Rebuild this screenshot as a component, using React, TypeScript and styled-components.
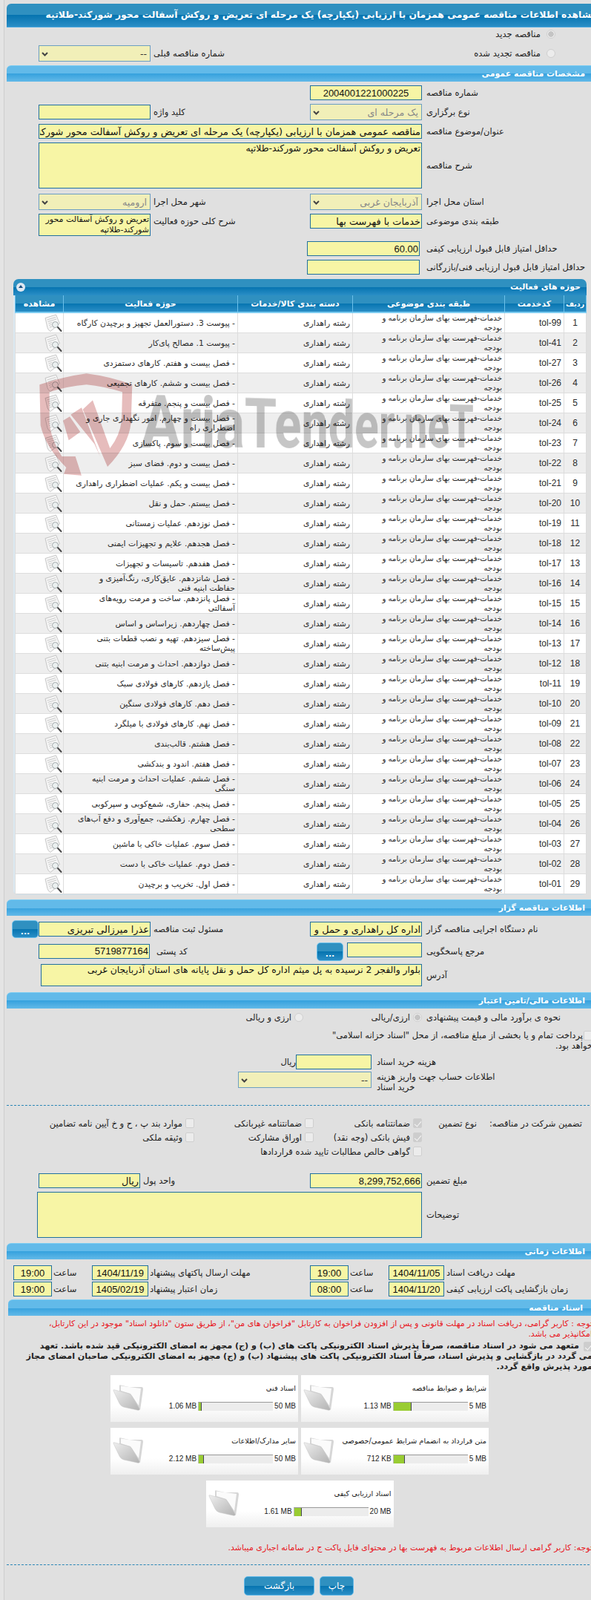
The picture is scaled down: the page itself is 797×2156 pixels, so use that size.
import styled, {createGlobalStyle} from "styled-components";

const activities = [
    ["tol-99", "- پیوست 3. دستورالعمل تجهیز و برچیدن کارگاه"],
    ["tol-41", "- پیوست 1. مصالح پای‌کار"],
    ["tol-27", "- فصل بیست و هفتم. کارهای دستمزدی"],
    ["tol-26", "- فصل بیست و ششم. کارهای تجمیعی"],
    ["tol-25", "- فصل بیست و پنجم. متفرقه"],
    ["tol-24", "- فصل بیست و چهارم. امور نگهداری جاری و اضطراری راه"],
    ["tol-23", "- فصل بیست و سوم. پاکسازی"],
    ["tol-22", "- فصل بیست و دوم. فضای سبز"],
    ["tol-21", "- فصل بیست و یکم. عملیات اضطراری راهداری"],
    ["tol-20", "- فصل بیستم. حمل و نقل"],
    ["tol-19", "- فصل نوزدهم. عملیات زمستانی"],
    ["tol-18", "- فصل هجدهم. علایم و تجهیزات ایمنی"],
    ["tol-17", "- فصل هفدهم. تاسیسات و تجهیزات"],
    ["tol-16", "- فصل شانزدهم. عایق‌کاری، رنگ‌آمیزی و حفاظت ابنیه فنی"],
    ["tol-15", "- فصل پانزدهم. ساخت و مرمت رویه‌های آسفالتی"],
    ["tol-14", "- فصل چهاردهم. زیراساس و اساس"],
    ["tol-13", "- فصل سیزدهم. تهیه و نصب قطعات بتنی پیش‌ساخته"],
    ["tol-12", "- فصل دوازدهم. احداث و مرمت ابنیه بتنی"],
    ["tol-11", "- فصل یازدهم. کارهای فولادی سبک"],
    ["tol-10", "- فصل دهم. کارهای فولادی سنگین"],
    ["tol-09", "- فصل نهم. کارهای فولادی با میلگرد"],
    ["tol-08", "- فصل هشتم. قالب‌بندی"],
    ["tol-07", "- فصل هفتم. اندود و بندکشی"],
    ["tol-06", "- فصل ششم. عملیات احداث و مرمت ابنیه سنگی"],
    ["tol-05", "- فصل پنجم. حفاری، شمع‌کوبی و سپرکوبی"],
    ["tol-04", "- فصل چهارم. زهکشی، جمع‌آوری و دفع آب‌های سطحی"],
    ["tol-03", "- فصل سوم. عملیات خاکی با ماشین"],
    ["tol-02", "- فصل دوم. عملیات خاکی با دست"],
    ["tol-01", "- فصل اول. تخریب و برچیدن"],
];

const docs = [
    {title: "شرایط و ضوابط مناقصه", used: "1.13 MB", max: "5 MB", fill: 24},
    {title: "اسناد فنی", used: "1.06 MB", max: "50 MB", fill: 4},
    {title: "متن قرارداد به انضمام شرایط عمومی/خصوصی", used: "712 KB", max: "5 MB", fill: 15},
    {title: "سایر مدارک/اطلاعات", used: "2.12 MB", max: "50 MB", fill: 7},
    {title: "اسناد ارزیابی کیفی", used: "1.61 MB", max: "20 MB", fill: 10},
];

const GlobalStyle = createGlobalStyle`
  html, body {
    margin: 0;
    padding: 0;
    background: #e4e4e4;
  }

  * {
    box-sizing: border-box;
  }
`
const Frame = styled.div`
  width: 797px;
  height: 2156px;
  overflow: hidden;
  padding-left: 5px;
`
const Rail = styled.div`
  width: 804px;
  height: 2156px;
  padding-left: 3px;
  border-left: 1px solid #cdcdcd;
  background: #e0e0e0;
`
const Page = styled.div`
  direction: rtl;
  width: 796px;
  padding-top: 5px;
  font-family: "DejaVu Sans", sans-serif;
  font-size: 11.5px;
  color: #222;
  display: flex;
  flex-direction: column;
`
const TitleBar = styled.div`
  height: 32px;
  line-height: 30px;
  color: #fff;
  font-weight: bold;
  font-size: 12.4px;
  white-space: nowrap;
  border-radius: 6px 6px 0 0;
  border-bottom: 1px solid #4aa8e0;
  background: linear-gradient(#2f90c0 0, #2f90c0 50%, #0674b0 50%, #2a8ec6 100%);
`
const SectionBar = styled.div<{ $top?: number; $inset?: number }>`
  height: 22px;
  line-height: 21px;
  margin-top: ${p => p.$top ?? 0}px;
  margin-left: ${p => p.$inset ?? 0}px;
  padding-right: ${p => p.$inset ? 19 : 16}px;
  color: #fff;
  font-weight: bold;
  font-size: 11px;
  border-radius: 6px 6px 0 0;
  border-top: 1px solid #7accf2;
  background: linear-gradient(#62bae9 0, #62bae9 50%, #37a2de 50%, #62b9e8 100%);
`
const FieldRow = styled.div<{ $top?: number; $right?: number }>`
  display: grid;
  grid-template-columns: 236px 151px 1fr ${p => p.$right ?? 151}px 43px;
  align-items: center;
  margin-top: ${p => p.$top ?? 5}px;
`
const Label = styled.label<{ $pad?: number; $alignTop?: boolean }>`
  text-align: left;
  padding-left: ${p => p.$pad ?? 6}px;
  line-height: 20px;
  white-space: nowrap;
  align-self: ${p => p.$alignTop ? "start" : "auto"};
`
const Input = styled.input<{ $latin?: boolean; $center?: boolean; $w?: number; $span?: boolean; $inner?: number; $start?: boolean; $end?: boolean }>`
  display: block;
  height: 20px;
  width: ${p => p.$w ? `${p.$w}px` : "100%"};
  min-width: 0;
  padding: 0 1px;
  margin: 0;
  margin-right: ${p => p.$inner ?? 0}px;
  border: 1px solid #21709f;
  border-radius: 0;
  outline: none;
  color: #111;
  background: #f7f5a5;
  font-family: ${p => p.$latin ? `"Liberation Sans", sans-serif` : `"DejaVu Sans", sans-serif`};
  font-size: ${p => p.$latin ? "13px" : "12.9px"};
  text-align: ${p => p.$center ? "center" : "right"};
  grid-column: ${p => p.$span ? "2 / 5" : "auto"};
  align-self: ${p => p.$start ? "start" : "auto"};
  justify-self: ${p => p.$end ? "end" : "auto"};
`
const TextArea = styled.textarea<{ $h: number; $w: number }>`
  display: block;
  height: ${p => p.$h}px;
  width: ${p => p.$w}px;
  grid-column: 2 / 6;
  padding: 0 1px;
  margin: 0;
  resize: none;
  overflow: hidden;
  outline: none;
  border: 1px solid #21709f;
  border-radius: 0;
  color: #111;
  background: #f7f5a5;
  font-family: "DejaVu Sans", sans-serif;
  font-size: 12.4px;
  line-height: 14px;
`
const SmallArea = styled(TextArea)`
  grid-column: auto;
  font-size: 11px;
`
const Select = styled.select<{ $muted?: boolean; $w?: number }>`
  display: block;
  height: 22px;
  width: ${p => p.$w ? `${p.$w}px` : "100%"};
  margin: 0;
  padding: 0 4px 0 16px;
  appearance: none;
  border: 1px solid #6c9fc2;
  border-radius: 0;
  outline: none;
  color: ${p => p.$muted ? "#888" : "#333"};
  font-family: "DejaVu Sans", sans-serif;
  font-size: 12.6px;
  background: #f1efb8 url("data:image/svg+xml,%3Csvg xmlns='http://www.w3.org/2000/svg' width='9' height='6'%3E%3Cpath d='M1 1l3.5 3.5L8 1' fill='none' stroke='%23444' stroke-width='2'/%3E%3C/svg%3E") no-repeat 3px 8px;
`
const Radio = styled.span<{ $on?: boolean }>`
  display: inline-block;
  flex: none;
  width: 12px;
  height: 12px;
  border-radius: 50%;
  border: 1px solid #cfcfcf;
  background: ${p => p.$on ? "radial-gradient(circle, #c4c4c4 0 3.5px, #ededed 4px)" : "#ececec"};
`
const Check = styled.span<{ $on?: boolean }>`
  display: inline-block;
  position: relative;
  flex: none;
  width: 12px;
  height: 13px;
  vertical-align: middle;
  border-radius: 2px;
  border: 1px solid #cfcfcf;
  background: ${p => p.$on ? "#cdcdcd" : "#ececec"};

  &::after {
    content: "";
    display: ${p => p.$on ? "block" : "none"};
    position: absolute;
    left: 3px;
    top: 1px;
    width: 4px;
    height: 8px;
    border: solid #f6f6f6;
    border-width: 0 1.5px 1.5px 0;
    transform: rotate(40deg);
  }
`
const Choice = styled.div<{ $inner?: number; $gap?: number; $span?: string }>`
  display: flex;
  align-items: center;
  gap: ${p => p.$gap ?? 4}px;
  padding-right: ${p => p.$inner ?? 0}px;
  white-space: nowrap;
  line-height: 18px;
  grid-column: ${p => p.$span ?? "auto"};
`
const Panel = styled.div`
  position: relative;
  width: 773px;
  margin: 6px 0 0 0;
  margin-right: 14px;
  padding: 0 0 0 3px;
  border-radius: 7px 7px 6px 6px;
  background: #dbe9f2;
  border-bottom: 1px solid #cfdfe8;
`
const PanelHead = styled.div`
  position: relative;
  height: 22px;
  margin-left: -3px;
  line-height: 21px;
  padding-right: 8px;
  color: #fff;
  font-weight: bold;
  font-size: 11px;
  border-radius: 7px 7px 0 0;
  background: linear-gradient(#2f90c0 0, #2f90c0 50%, #0674b0 50%, #2a8ec6 100%);
`
const Toggle = styled.span`
  position: absolute;
  left: 4px;
  top: 5px;
  width: 12px;
  height: 12px;
  border-radius: 50%;
  background: #dfe8f2;

  &::after {
    content: "";
    position: absolute;
    left: 3px;
    top: 3px;
    border: 3px solid transparent;
    border-top-width: 0;
    border-bottom: 4px solid #1a4f80;
  }
`
const Table = styled.table`
  width: 770px;
  table-layout: fixed;
  border-collapse: collapse;
  background: #fff;
`
const HeadCell = styled.th<{ $small?: boolean }>`
  height: 23px;
  padding: 0;
  color: #fff;
  font-size: ${p => p.$small ? "9.5px" : "11px"};
  font-weight: bold;
  white-space: nowrap;
  border-left: 1px solid #6cc0ea;
  border-right: 1px solid #6cc0ea;
  border-bottom: 2px solid #7ccbf0;
  background: linear-gradient(#2f90c0 0, #2f90c0 50%, #0674b0 50%, #2a8ec6 100%);
`
const Row = styled.tr<{ $alt: boolean }>`
  height: 27px;
  background: ${p => p.$alt ? "#eeeeee" : "#ffffff"};
`
const Cell = styled.td<{ $latin?: boolean; $center?: boolean; $size?: number }>`
  padding: 0 3px;
  height: 27px;
  line-height: 13px;
  font-size: ${p => p.$latin ? 12 : p.$size ?? 10.8}px;
  font-family: ${p => p.$latin ? `"Liberation Sans", sans-serif` : "inherit"};
  text-align: ${p => p.$center ? "center" : "right"};
  color: #2b2b2b;
  border: 1px solid #dddddd;
  overflow: hidden;
`
const CodeCell = styled(Cell)`
  direction: ltr;
`
const ActivityText = styled.span`
  display: block;
  padding: 0 0 0 10px;
`
const RowIcon = styled.svg`
  display: block;
  margin: -1px -2px -1px 0;
`
const Watermark = styled.div`
  position: absolute;
  left: 0;
  top: 0;
  width: 100%;
  height: 300px;
  pointer-events: none;
  mix-blend-mode: multiply;
`
const WatermarkShield = styled.svg`
  position: absolute;
  left: 32px;
  top: 124px;
`
const WatermarkText = styled.div`
  position: absolute;
  left: 172px;
  top: 138px;
  height: 110px;
  direction: ltr;
  font-family: "Roboto", sans-serif;
  font-weight: 700;
  font-size: 100px;
  line-height: 110px;
  white-space: nowrap;
  color: #c6c6c6;
  transform-origin: left 89px;
  transform: perspective(600px) rotateY(15deg) scaleX(0.84);
`
const Dots = styled.button<{ $h: number }>`
  display: block;
  width: 36px;
  height: ${p => p.$h}px;
  padding: 6px 0 0;
  flex: none;
  color: #fff;
  font-size: 11px;
  font-weight: bold;
  font-family: "DejaVu Sans", sans-serif;
  border: 1px solid #6cc0ea;
  border-radius: 5px;
  background: linear-gradient(#2f90c0 0, #2f90c0 50%, #0674b0 50%, #2a8ec6 100%);
`
const RefCell = styled.div`
  display: flex;
  align-items: flex-start;
  gap: 5px;
  height: 25px;
  padding-top: 1px;
`
const Paragraph = styled.div<{ $top: number; $size?: number; $red?: boolean; $bold?: boolean }>`
  margin-top: ${p => p.$top}px;
  padding-right: 6px;
  font-size: ${p => p.$size ?? 11.5}px;
  line-height: 14px;
  white-space: nowrap;
  color: ${p => p.$red ? "#e8141c" : "#222"};
  font-weight: ${p => p.$bold ? "bold" : "normal"};
`
const InlineBox = styled.span<{ $w: number }>`
  display: inline-block;
  width: ${p => p.$w}px;
`
const FeeRow = styled.div<{ $top: number }>`
  display: grid;
  grid-template-columns: 304px 102px 1fr;
  align-items: center;
  margin-top: ${p => p.$top}px;
`
const AccountRow = styled.div`
  display: grid;
  grid-template-columns: 304px 1fr;
  margin-top: 3px;
  height: 28px;
`
const AccountLabel = styled(Label)`
  padding-left: 7px;
  line-height: 14px;
  white-space: normal;
`
const Divider = styled.div<{ $top: number }>`
  margin-top: ${p => p.$top}px;
  border-top: 1px dashed #2a86b6;
`
const GuaranteeGrid = styled.div`
  display: grid;
  grid-template-columns: 162px 74px 146px 161px 1fr;
  grid-auto-rows: 19px;
  align-items: center;
  margin-top: 14px;
  white-space: nowrap;
`
const GuaranteeTitle = styled.div`
  padding-right: 20px;
`
const TimeRow = styled.div<{ $top: number }>`
  display: grid;
  grid-template-columns: 206px 75px 54px 52px 218px 76px 54px 52px;
  align-items: center;
  margin-top: ${p => p.$top}px;
`
const TimeWord = styled(Label)`
  padding-left: 2px;
`
const DocGrid = styled.div`
  display: grid;
  grid-template-columns: 253px 253px;
  gap: 8px 4px;
  margin: 4px 146px 0 0;
  justify-content: start;
`
const DocCard = styled.div<{ $wide?: boolean }>`
  display: flex;
  height: 63px;
  padding: 0 3px;
  justify-self: center;
  width: 253px;
  grid-column: ${p => p.$wide ? "1 / -1" : "auto"};
  background: linear-gradient(#ffffff 0, #ffffff 65%, #efefef 100%);
`
const DocInfo = styled.div`
  flex: 1;
  display: flex;
  flex-direction: column;
`
const DocTitle = styled.div`
  margin-top: 11px;
  line-height: 14px;
  font-size: 9.8px;
  white-space: nowrap;
  color: #222;
`
const Meter = styled.div`
  display: flex;
  align-items: center;
  direction: ltr;
  justify-content: flex-end;
  margin-top: 11px;
  gap: 2px;
  font-family: "Liberation Sans", sans-serif;
  font-size: 10px;
  color: #222;
  line-height: 12px;
`
const MeterTrack = styled.div`
  width: 101px;
  height: 12px;
  background: #ececec;
  border-top: 1px solid #999;
  border-left: 1px solid #bbb;
`
const MeterFill = styled.div`
  height: 100%;
  background: #9c3;
  border-right: 1px solid #445;
`
const FolderSvg = styled.svg`
  flex: none;
  margin-top: 13px;
`
const Buttons = styled.div`
  display: flex;
  gap: 7px;
  margin: 15px 328px 0 0;
`
const ActionButton = styled.button<{ $w: number }>`
  width: ${p => p.$w}px;
  height: 26px;
  padding: 0;
  color: #fff;
  font-family: "DejaVu Sans", sans-serif;
  font-size: 12px;
  border: 1px solid #5fb8e8;
  border-radius: 5px;
  background: linear-gradient(#2f90c0 0, #2f90c0 50%, #0674b0 50%, #2a8ec6 100%);
`

function SearchDocIcon() {
    return (
        <RowIcon width="24" height="25" viewBox="0 0 24 25">
            <path d="M1 5.5 L15.5 1 L20.5 13 L8 23.5 Q5 22 4 18.5 Z" fill="#f6f6f6" stroke="#b9b9b9" strokeWidth="0.8"/>
            <path d="M3.5 8 L15 4.5 M4.5 10.5 L16 7 M5.5 13 L10 11.6 M6 15.5 L9.5 14.4 M7 18 L10 17" stroke="#c4c4c4" strokeWidth="0.9"/>
            <circle cx="14.5" cy="14.5" r="4" fill="#ebf0f0" stroke="#a2a8aa" strokeWidth="1"/>
            <path d="M18 18 L22.5 23" stroke="#4a4a4a" strokeWidth="2" strokeLinecap="round"/>
        </RowIcon>
    )
}

function FolderIcon({id}: { id: string }) {
    return (
        <FolderSvg width="42" height="36" viewBox="0 0 42 36">
            <defs>
                <linearGradient id={id} x1="0" y1="0" x2="1" y2="1">
                    <stop offset="0" stopColor="#efefef"/>
                    <stop offset="1" stopColor="#b2b2b2"/>
                </linearGradient>
            </defs>
            <path d="M9 1 Q9 0 11 0.5 L22 3 L39 3 Q41 3 41 6 L37 34 L24 14 L9 9 Z" fill="#d6d6d6"/>
            <path d="M11 1.5 L38 5 L35 28 L24 12 L11 8 Z" fill="#fbfbfb"/>
            <path d="M1 8 Q0 6 3 7 L22 12 Q25 13 27 17 L36 32 Q37 35 33 34 L15 30 Q11 29 9 25 Z" fill={`url(#${id})`} stroke="#c4c4c4" strokeWidth="0.5"/>
        </FolderSvg>
    )
}

function Shield() {
    return (
        <WatermarkShield width="130" height="146" viewBox="50 50 390 438">
            <path fill="#e6bcbc" d="M60 105 Q160 72 250 60 Q345 72 435 105 L430 260 Q420 350 335 437 L235 205 L275 168 L345 362 Q385 310 392 250 L395 135 Q320 112 250 105 Q170 112 100 135 L100 260 Q105 320 150 395 L205 395 L230 472 L158 466 L168 440 Q85 360 64 270 Z"/>
            <path fill="#e6bcbc" d="M155 250 L182 234 L225 296 L178 330 Z"/>
            <path fill="#e6bcbc" d="M186 226 L230 198 L305 395 L282 345 Z"/>
        </WatermarkShield>
    )
}

export default function App() {
    return (
        <Frame>
            <GlobalStyle/>
            <Rail>
                <Page>
                    <TitleBar>مشاهده اطلاعات مناقصه عمومی همزمان با ارزیابی (یکپارچه) یک مرحله ای تعریض و روکش آسفالت محور شورکند-طلاتپه</TitleBar>
                    <Choice $inner={56} $gap={8}><Radio $on/>مناقصه جدید</Choice>
                    <FieldRow $top={6}>
                        <Choice $inner={56} $gap={8} $span="1 / 3"><Radio/>مناقصه تجدید شده</Choice>
                        <Label $pad={4}>شماره مناقصه قبلی</Label>
                        <Select><option>--</option></Select>
                    </FieldRow>

                    <SectionBar $top={5}>مشخصات مناقصه عمومی</SectionBar>
                    <FieldRow>
                        <Label>شماره مناقصه</Label>
                        <Input readOnly $latin $center value="2004001221000225"/>
                    </FieldRow>
                    <FieldRow>
                        <Label>نوع برگزاری</Label>
                        <Select $muted><option>یک مرحله ای</option></Select>
                        <Label $pad={4}>کلید واژه</Label>
                        <Input readOnly value=""/>
                    </FieldRow>
                    <FieldRow>
                        <Label>عنوان/موضوع مناقصه</Label>
                        <Input readOnly $span value="مناقصه عمومی همزمان با ارزیابی (یکپارچه) یک مرحله ای تعریض و روکش آسفالت محور شورکند-طلاتپه"/>
                    </FieldRow>
                    <FieldRow>
                        <Label>شرح مناقصه</Label>
                        <TextArea readOnly $h={62} $w={517} value="تعریض و روکش آسفالت محور شورکند-طلاتپه"/>
                    </FieldRow>
                    <FieldRow $top={7}>
                        <Label>استان محل اجرا</Label>
                        <Select $muted><option>آذربایجان غربی</option></Select>
                        <Label $pad={4}>شهر محل اجرا</Label>
                        <Select $muted><option>ارومیه</option></Select>
                    </FieldRow>
                    <FieldRow>
                        <Label $alignTop>طبقه بندی موضوعی</Label>
                        <Input readOnly $start value="خدمات با فهرست بها"/>
                        <Label $pad={4} $alignTop>شرح کلی حوزه فعالیت</Label>
                        <SmallArea readOnly $h={30} $w={151} value={"تعریض و روکش آسفالت محور\nشورکند-طلاتپه"}/>
                    </FieldRow>
                    <FieldRow $top={7}>
                        <Label>حداقل امتیاز قابل قبول ارزیابی کیفی</Label>
                        <Input readOnly $latin value="60.00" $w={152} $inner={3}/>
                    </FieldRow>
                    <FieldRow>
                        <Label>حداقل امتیاز قابل قبول ارزیابی فنی/بازرگانی</Label>
                        <Input readOnly value="" $w={152} $inner={3}/>
                    </FieldRow>

                    <Panel>
                        <PanelHead>حوزه های فعالیت<Toggle/></PanelHead>
                        <Table>
                            <colgroup>
                                <col width={30}/>
                                <col width={80}/>
                                <col width={205}/>
                                <col width={155}/>
                                <col width={235}/>
                                <col width={65}/>
                            </colgroup>
                            <thead>
                            <tr>
                                <HeadCell $small>ردیف</HeadCell>
                                <HeadCell>کدخدمت</HeadCell>
                                <HeadCell>طبقه بندی موضوعی</HeadCell>
                                <HeadCell>دسته بندی کالا/خدمات</HeadCell>
                                <HeadCell>حوزه فعالیت</HeadCell>
                                <HeadCell>مشاهده</HeadCell>
                            </tr>
                            </thead>
                            <tbody>
                            {activities.map(([code, name], i) => (
                                <Row key={code} $alt={i % 2 === 1}>
                                    <Cell $latin $center>{i + 1}</Cell>
                                    <CodeCell $latin>{code}</CodeCell>
                                    <Cell $size={10.2}>خدمات-فهرست بهای سازمان برنامه و<br/>بودجه</Cell>
                                    <Cell>رشته راهداری</Cell>
                                    <Cell><ActivityText>{name}</ActivityText></Cell>
                                    <Cell><SearchDocIcon/></Cell>
                                </Row>
                            ))}
                            </tbody>
                        </Table>
                        <Watermark>
                            <Shield/>
                            <WatermarkText>AriaTender.neT</WatermarkText>
                        </Watermark>
                    </Panel>

                    <SectionBar $top={6}>اطلاعات مناقصه گزار</SectionBar>
                    <FieldRow $top={6}>
                        <Label>نام دستگاه اجرایی مناقصه گزار</Label>
                        <Input readOnly value="اداره کل راهداری و حمل و نقل جاده ای استان آذربایجان غربی"/>
                        <Label $pad={4}>مسئول ثبت مناقصه</Label>
                        <Input readOnly value="عذرا میرزالی تبریزی"/>
                        <Dots $h={24}>...</Dots>
                    </FieldRow>
                    <FieldRow>
                        <Label>مرجع پاسخگویی</Label>
                        <RefCell>
                            <Input readOnly value="" $w={101}/>
                            <Dots $h={25}>...</Dots>
                        </RefCell>
                        <Label $pad={8}>کد پستی</Label>
                        <Input readOnly $latin $end value="5719877164" $w={150}/>
                    </FieldRow>
                    <FieldRow $top={5}>
                        <Label>آدرس</Label>
                        <TextArea readOnly $h={30} $w={514} value="بلوار والفجر 2 نرسیده به پل میثم اداره کل حمل و نقل پایانه های استان آذربایجان غربی"/>
                    </FieldRow>

                    <SectionBar $top={8}>اطلاعات مالی/تامین اعتبار</SectionBar>
                    <FieldRow $top={2}>
                        <Label>نحوه ی برآورد مالی و قیمت پیشنهادی</Label>
                        <Choice><Radio $on/>ارزی/ریالی</Choice>
                        <Choice $inner={9}><Radio/>ارزی و ریالی</Choice>
                    </FieldRow>
                    <Paragraph $top={7}>
                        <InlineBox $w={13}><Check/></InlineBox>پرداخت تمام و یا بخشی از مبلغ مناقصه، از محل "اسناد خزانه اسلامی"<br/>خواهد بود.
                    </Paragraph>
                    <FeeRow $top={5}>
                        <Label $pad={7}>هزینه خرید اسناد</Label>
                        <Input readOnly value=""/>
                        <span>ریال</span>
                    </FeeRow>
                    <AccountRow>
                        <AccountLabel>اطلاعات حساب جهت واریز هزینه<br/>خرید اسناد</AccountLabel>
                        <Select $w={180}><option>--</option></Select>
                    </AccountRow>
                    <Divider $top={17}/>

                    <GuaranteeGrid>
                        <GuaranteeTitle>تضمین شرکت در مناقصه:</GuaranteeTitle>
                        <span>نوع تضمین</span>
                        <Choice><Check $on/>ضمانتنامه بانکی</Choice>
                        <Choice><Check/>ضمانتنامه غیربانکی</Choice>
                        <Choice><Check/>موارد بند پ ، ح و خ آیین نامه تضامین</Choice>
                        <Choice $span="3"><Check $on/>فیش بانکی (وجه نقد)</Choice>
                        <Choice><Check/>اوراق مشارکت</Choice>
                        <Choice><Check/>وثیقه ملکی</Choice>
                        <Choice $span="3 / 6"><Check/>گواهی خالص مطالبات تایید شده قراردادها</Choice>
                    </GuaranteeGrid>

                    <FieldRow $top={20} $right={137}>
                        <Label>مبلغ تضمین</Label>
                        <Input readOnly $latin value="8,299,752,666"/>
                        <Label $pad={4}>واحد پول</Label>
                        <Input readOnly value="ریال"/>
                    </FieldRow>
                    <FieldRow>
                        <Label>توضیحات</Label>
                        <TextArea readOnly $h={62} $w={519} value=""/>
                    </FieldRow>

                    <SectionBar $top={7}>اطلاعات زمانی</SectionBar>
                    <TimeRow $top={8}>
                        <Label $pad={3}>مهلت دریافت اسناد</Label>
                        <Input readOnly $latin $center value="1404/11/05"/>
                        <TimeWord>ساعت</TimeWord>
                        <Input readOnly $latin $center value="19:00"/>
                        <Label $pad={2}>مهلت ارسال پاکتهای پیشنهاد</Label>
                        <Input readOnly $latin $center value="1404/11/19"/>
                        <TimeWord>ساعت</TimeWord>
                        <Input readOnly $latin $center value="19:00"/>
                    </TimeRow>
                    <TimeRow $top={2}>
                        <Label $pad={3}>زمان بازگشایی پاکت ارزیابی کیفی</Label>
                        <Input readOnly $latin $center value="1404/11/20"/>
                        <TimeWord>ساعت</TimeWord>
                        <Input readOnly $latin $center value="08:00"/>
                        <Label $pad={2}>زمان اعتبار پیشنهاد</Label>
                        <Input readOnly $latin $center value="1405/02/19"/>
                        <TimeWord>ساعت</TimeWord>
                        <Input readOnly $latin $center value="19:00"/>
                    </TimeRow>

                    <SectionBar $top={4} $inset={2}>اسناد مناقصه</SectionBar>
                    <Paragraph $top={4} $size={11} $red>
                        توجه : کاربر گرامی، دریافت اسناد در مهلت قانونی و پس از افزودن فراخوان به کارتابل "فراخوان های من"، از طریق ستون "دانلود اسناد" موجود در این کارتابل،<br/>امکانپذیر می باشد.
                    </Paragraph>
                    <Paragraph $top={2} $size={11.15} $bold>
                        <InlineBox $w={18}><Check $on/></InlineBox>متعهد می شود در اسناد مناقصه، صرفاً پذیرش اسناد الکترونیکی پاکت های (ب) و (ج) مجهز به امضای الکترونیکی قید شده باشد. تعهد<br/>
                        می گردد در بازگشایی و پذیرش اسناد، صرفاً اسناد الکترونیکی پاکت های پیشنهاد (ب) و (ج) مجهز به امضای الکترونیکی صاحبان امضای مجاز<br/>
                        مورد پذیرش واقع گردد.
                    </Paragraph>
                    <DocGrid>
                        {docs.map((doc, i) => (
                            <DocCard key={doc.title} $wide={i === 4}>
                                <DocInfo>
                                    <DocTitle>{doc.title}</DocTitle>
                                    <Meter>
                                        <span>{doc.used}</span>
                                        <MeterTrack>
                                            <MeterFill style={{width: doc.fill}}/>
                                        </MeterTrack>
                                        <span>{doc.max}</span>
                                    </Meter>
                                </DocInfo>
                                <FolderIcon id={`folder-${i}`}/>
                            </DocCard>
                        ))}
                    </DocGrid>
                    <Paragraph $top={21} $size={11} $red>
                        توجه: کاربر گرامی ارسال اطلاعات مربوط به فهرست بها در محتوای فایل پاکت ج در سامانه اجباری میباشد.
                    </Paragraph>
                    <Divider $top={15}/>
                    <Buttons>
                        <ActionButton $w={46}>چاپ</ActionButton>
                        <ActionButton $w={95}>بازگشت</ActionButton>
                    </Buttons>
                </Page>
            </Rail>
        </Frame>
    )
}
